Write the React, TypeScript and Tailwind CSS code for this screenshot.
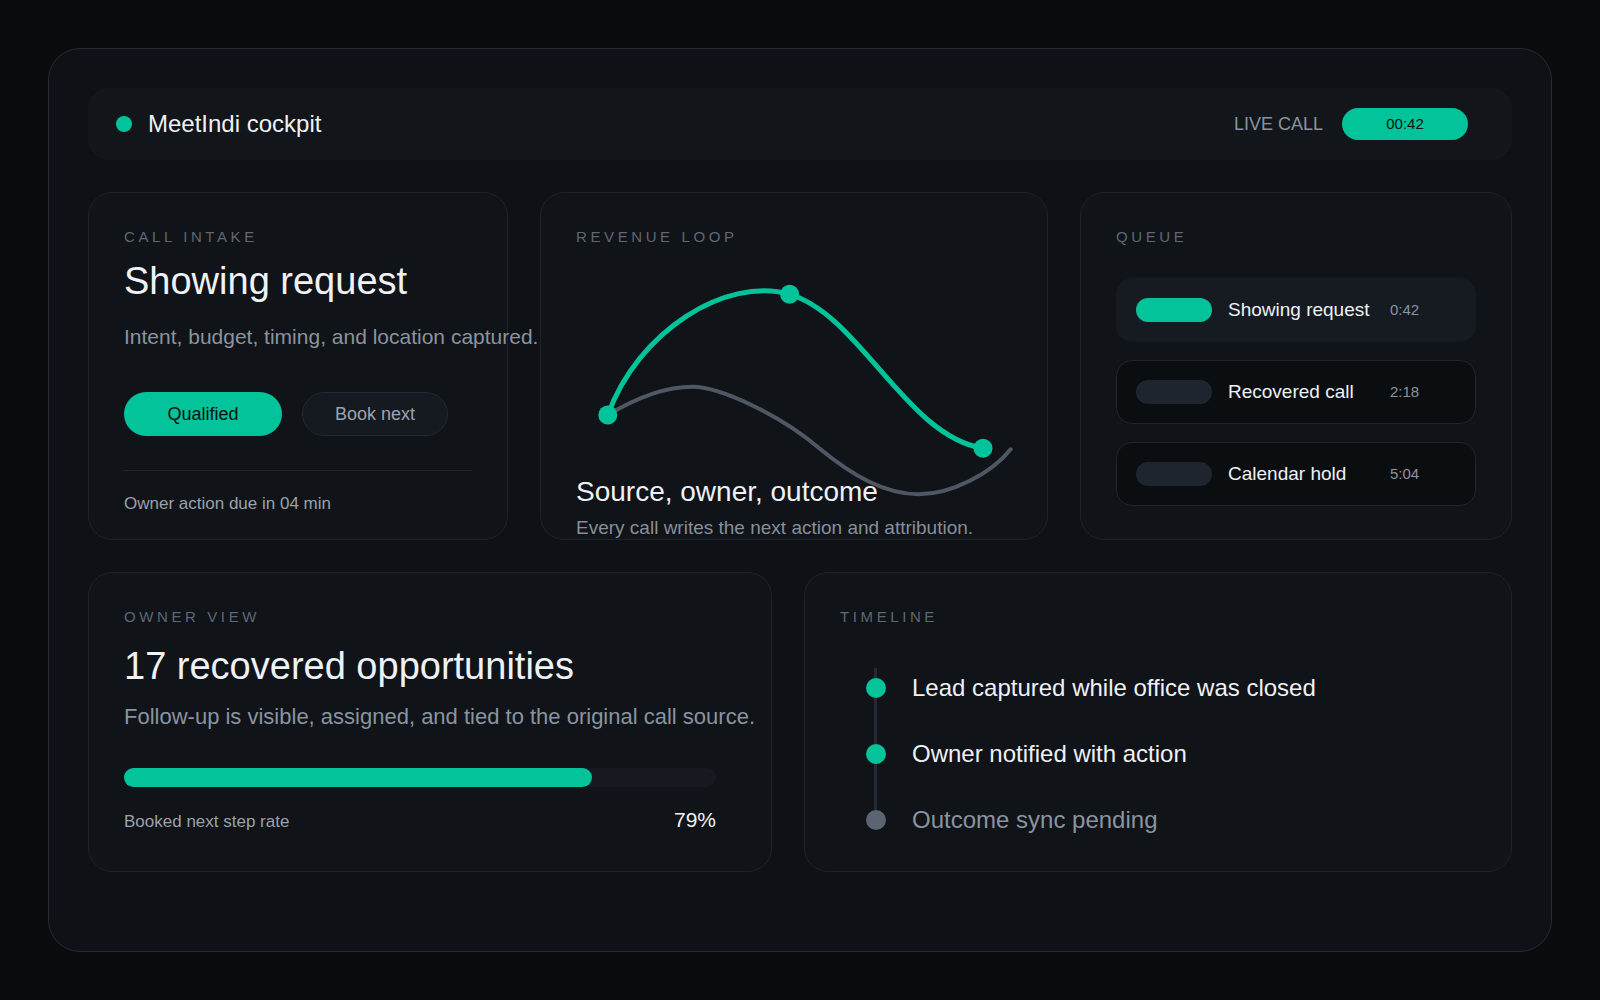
const green = 'bg-[#02c39a]';

const Label = ({ children }: { children: string }) => (
  <div className="text-[15px] leading-[18px] tracking-[0.24em] text-[#5f6774]">{children}</div>
);

const cardStyle = 'min-h-0 rounded-[24px] border border-[#1e232b] bg-[#101317] p-[35px]';

const queue = [
  { title: 'Showing request', time: '0:42', active: true },
  { title: 'Recovered call', time: '2:18', active: false },
  { title: 'Calendar hold', time: '5:04', active: false },
];

const timeline = [
  { text: 'Lead captured while office was closed', done: true },
  { text: 'Owner notified with action', done: true },
  { text: 'Outcome sync pending', done: false },
];

const Header = () => {
  return (
    <div className="flex h-[72px] items-center justify-between rounded-[20px] bg-[#121519] pl-7 pr-[44px]">
      <div className="flex items-center">
        <div className={'h-4 w-4 rounded-full ' + green} />
        <div className="ml-4 text-[24px] text-[#eef1f5]">MeetIndi cockpit</div>
      </div>
      <div className="flex items-center">
        <div className="text-[18px] text-[#8a93a1]">LIVE CALL</div>
        <div
          className={
            'ml-[19px] flex h-8 w-[126px] items-center justify-center rounded-full text-[15px] text-[#06120e] ' + green
          }
        >
          00:42
        </div>
      </div>
    </div>
  );
};

const IntakeCard = () => {
  return (
    <div className={cardStyle}>
      <Label>CALL INTAKE</Label>
      <h2 className="mt-3 text-[38px] leading-[46px] text-[#eef1f5]">Showing request</h2>
      <p className="mt-[18px] whitespace-nowrap text-[21px] leading-[30px] text-[#8a93a1]">
        Intent, budget, timing, and location captured.
      </p>
      <div className="mt-10 flex gap-5">
        <button className={'h-11 w-[158px] rounded-full text-[18px] text-[#06120e] ' + green}>Qualified</button>
        <button className="h-11 w-[146px] rounded-full border border-[#232932] bg-[#151920] text-[18px] text-[#9aa3b0]">
          Book next
        </button>
      </div>
      <div className="mt-[34px] h-px bg-[#1f252d]" />
      <div className="mt-[23px] text-[17px] leading-5 text-[#9ba1aa]">Owner action due in 04 min</div>
    </div>
  );
};

const LoopCard = () => {
  return (
    <div className={cardStyle}>
      <Label>REVENUE LOOP</Label>
      <svg width="436" height="229" viewBox="0 0 436 229" className="block overflow-visible" fill="none">
        <path
          d="M31.8 169 C60 152, 90 140.7, 116.3 140.7 C145 140.7, 205 170, 241.4 200.7 C277.4 230.7, 310 248.3, 342.8 248.3 C375 248.3, 415 228, 434.7 203.3"
          stroke="#4f5764"
          strokeWidth="4"
          strokeLinecap="round"
        />
        <path
          d="M31.8 169 C62 85, 150 30, 213.6 48.3 C283.6 68.3, 330 190, 407 202.3"
          stroke="#02c39a"
          strokeWidth="5"
          strokeLinecap="round"
        />
        <circle cx="31.8" cy="169" r="9.5" fill="#02c39a" />
        <circle cx="213.6" cy="48.3" r="9.5" fill="#02c39a" />
        <circle cx="407" cy="202.3" r="9.5" fill="#02c39a" />
      </svg>
      <div className="relative whitespace-nowrap text-[28px] leading-[34px] text-[#eef1f5]">Source, owner, outcome</div>
      <div className="relative mt-[7px] whitespace-nowrap text-[19px] leading-[24px] text-[#868f9c]">
        Every call writes the next action and attribution.
      </div>
    </div>
  );
};

const QueueCard = () => {
  return (
    <div className={cardStyle}>
      <Label>QUEUE</Label>
      <div className="mt-8 flex flex-col gap-[18px]">
        {queue.map((item) => (
          <div
            key={item.title}
            className={
              'grid h-16 grid-cols-[76px_146px_auto] items-center gap-4 rounded-2xl border px-[19px] ' +
              (item.active ? 'border-transparent bg-[#161a21]' : 'border-[#1f252d] bg-[#0b0e11]')
            }
          >
            <div className={'h-6 rounded-full ' + (item.active ? green : 'bg-[#1f252e]')} />
            <div className="whitespace-nowrap text-[19px] text-[#eef1f5]">{item.title}</div>
            <div className="text-[15px] text-[#8b93a0]">{item.time}</div>
          </div>
        ))}
      </div>
    </div>
  );
};

const OwnerCard = () => {
  return (
    <div className={cardStyle}>
      <Label>OWNER VIEW</Label>
      <h2 className="mt-[17px] text-[38px] leading-[46px] text-[#eef1f5]">17 recovered opportunities</h2>
      <p className="mt-[13px] whitespace-nowrap text-[22px] leading-[30px] text-[#8a93a1]">
        Follow-up is visible, assigned, and tied to the original call source.
      </p>
      <div className="mt-9 h-[19px] w-[592px] rounded-full bg-[#161a20]">
        <div className={'h-full rounded-full ' + green} style={{ width: '79%' }} />
      </div>
      <div className="mt-5 flex w-[592px] items-baseline justify-between">
        <span className="text-[17px] leading-5 text-[#9ba1aa]">Booked next step rate</span>
        <span className="text-[21px] leading-[26px] text-[#eef1f5]">79%</span>
      </div>
    </div>
  );
};

const TimelineCard = () => {
  return (
    <div className={cardStyle}>
      <Label>TIMELINE</Label>
      <div className="relative ml-[26px] mt-[42px] flex flex-col gap-[26px]">
        <div className="absolute bottom-[30px] left-2 top-0 w-[3px] bg-[#232a33]" />
        {timeline.map((step) => (
          <div key={step.text} className="relative flex h-10 items-center gap-[26px]">
            <div className={'h-5 w-5 rounded-full ' + (step.done ? green : 'bg-[#5b6472]')} />
            <span className={'text-[24px] ' + (step.done ? 'text-[#eef1f5]' : 'text-[#8a93a1]')}>{step.text}</span>
          </div>
        ))}
      </div>
    </div>
  );
};

export default function App() {
  return (
    <div className="min-h-screen bg-[#0a0b0d] p-12 font-['Liberation_Sans',Arial,sans-serif]">
      <div className="h-[904px] rounded-[32px] border border-[#242b34] bg-[#0e1115] p-[39px]">
        <Header />
        <div className="mt-8 grid grid-cols-[420px_508px_432px] grid-rows-[348px] gap-8">
          <IntakeCard />
          <LoopCard />
          <QueueCard />
        </div>
        <div className="mt-8 grid grid-cols-[684px_708px] grid-rows-[300px] gap-8">
          <OwnerCard />
          <TimelineCard />
        </div>
      </div>
    </div>
  );
}
